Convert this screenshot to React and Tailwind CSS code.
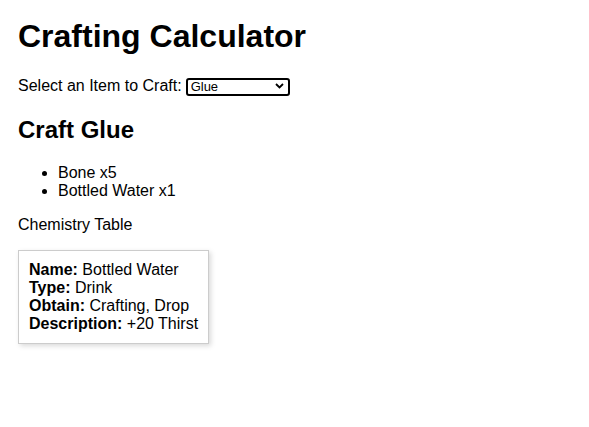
import { useState } from 'react';

const RECIPES = {
  Glue: {
    ingredients: [
      { name: 'Bone', qty: 5 },
      { name: 'Bottled Water', qty: 1 },
    ],
    station: 'Chemistry Table',
  },
  Rope: {
    ingredients: [{ name: 'Cloth', qty: 3 }],
    station: 'Workbench',
  },
};

const ITEM = {
  name: 'Bottled Water',
  type: 'Drink',
  obtain: 'Crafting, Drop',
  description: '+20 Thirst',
};

export default function App() {
  const [item, setItem] = useState('Glue');
  const recipe = RECIPES[item];

  return (
    <div className="min-h-screen bg-white pt-[18px] pl-[18px] pr-4 pb-4 text-black font-['Liberation_Sans',Arial,sans-serif] text-base leading-[18.4px]">
      <h1 className="text-[32px] font-bold leading-[37px] mb-[22px]">Crafting Calculator</h1>

      <div className="flex items-center">
        <label htmlFor="item">Select an Item to Craft:</label>
        <div className="relative ml-1">
          <select
            id="item"
            value={item}
            onChange={(e) => setItem(e.target.value)}
            className="appearance-none w-[104px] h-[18px] border-2 border-black rounded-[3px] bg-white pl-[3px] text-[13px] leading-[14px] font-['Liberation_Sans',Arial,sans-serif]"
          >
            {Object.keys(RECIPES).map((k) => (
              <option key={k} value={k}>{k}</option>
            ))}
          </select>
          <svg
            className="absolute right-[6px] top-[6px] pointer-events-none"
            width="9"
            height="6"
            viewBox="0 0 9 6"
            fill="none"
            stroke="black"
            strokeWidth="1.8"
          >
            <path d="M1 1l3.5 3.5L8 1" />
          </svg>
        </div>
      </div>

      <h2 className="text-2xl font-bold leading-[27.6px] mt-5 mb-5">Craft {item}</h2>

      <ul className="list-disc pl-10">
        {recipe.ingredients.map((i) => (
          <li key={i.name}>
            {i.name} x{i.qty}
          </li>
        ))}
      </ul>

      <p className="mt-4 mb-[15px]">{recipe.station}</p>

      <div className="inline-block border border-[#ccc] p-[10px] shadow-[2px_2px_5px_rgba(0,0,0,0.15)] leading-[18px]">
        <div><span className="font-bold">Name:</span> {ITEM.name}</div>
        <div><span className="font-bold">Type:</span> {ITEM.type}</div>
        <div><span className="font-bold">Obtain:</span> {ITEM.obtain}</div>
        <div><span className="font-bold">Description:</span> {ITEM.description}</div>
      </div>
    </div>
  );
}
